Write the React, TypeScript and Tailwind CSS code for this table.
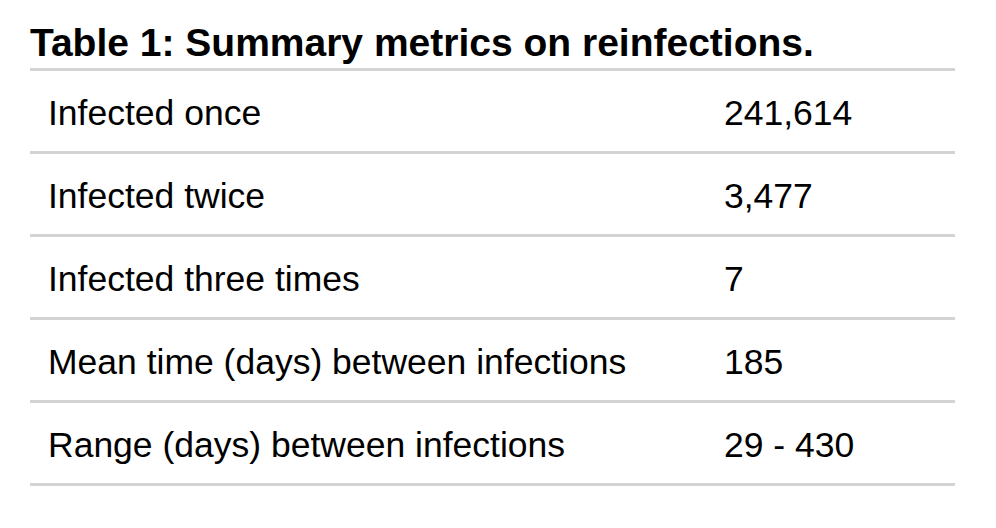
const rows = [
  ["Infected once", "241,614"],
  ["Infected twice", "3,477"],
  ["Infected three times", "7"],
  ["Mean time (days) between infections", "185"],
  ["Range (days) between infections", "29 - 430"],
];

export default function App() {
  return (
    <div
      className="min-h-[528px] w-[996px] bg-white pt-[20px] text-black"
      style={{ fontFamily: '"Liberation Sans", Arial, sans-serif' }}
    >
      <div className="ml-[30px] w-[925px]">
        <h1 className="mb-[2px] text-[39px] font-bold leading-[46px]">
          Table 1: Summary metrics on reinfections.
        </h1>
        <div className="border-t-[3px] border-[#d3d3d3]">
          {rows.map(([label, value]) => (
            <div
              key={label}
              className="grid h-[83px] grid-cols-[694px_1fr] items-center border-b-[3px] border-[#d3d3d3] pt-[5px] text-[35.5px] leading-none"
            >
              <span className="pl-[18px]">{label}</span>
              <span>{value}</span>
            </div>
          ))}
        </div>
      </div>
    </div>
  );
}
